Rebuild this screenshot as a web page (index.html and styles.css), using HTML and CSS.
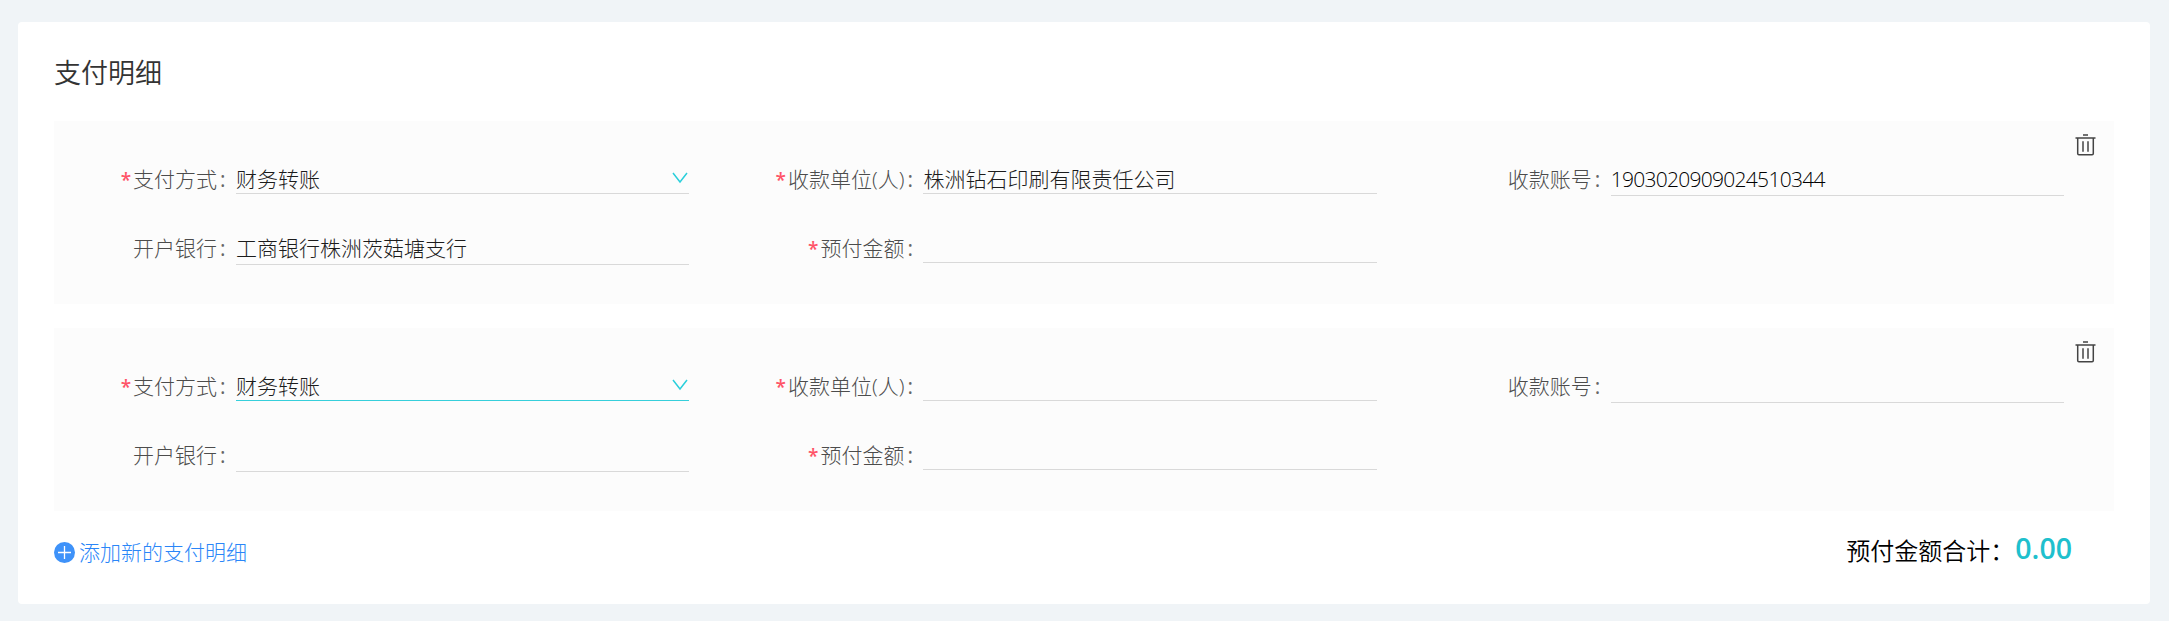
FILE: index.html
```
<!DOCTYPE html>
<html lang="zh-CN">
<head>
<meta charset="utf-8">
<title>支付明细</title>
<link rel="stylesheet" href="styles.css">
</head>
<body>
<svg class="sprite" aria-hidden="true">
  <symbol id="trash" viewBox="0 0 21 22">
    <path d="M8 1.1h5M.5 4h20M2.7 4v15.6q0 1.2 1.2 1.2h13.2q1.2 0 1.2-1.2V4M8 7.2v10.6M13 7.2v10.6" fill="none" stroke="currentColor" stroke-width="1.5"/>
  </symbol>
  <symbol id="chevron" viewBox="0 0 16 12">
    <path d="M1 1l7 9 7-9" fill="none" stroke="currentColor" stroke-width="1.5"/>
  </symbol>
</svg>
<main class="card">
  <h1 class="title">支付明细</h1>

  <section class="panel">
    <svg class="delete"><use href="#trash"/></svg>
    <div class="field">
      <label class="label required">支付方式</label>
      <div class="control select">财务转账<svg class="chevron"><use href="#chevron"/></svg></div>
    </div>
    <div class="field">
      <label class="label required">收款单位(人)</label>
      <div class="control">株洲钻石印刷有限责任公司</div>
    </div>
    <div class="field">
      <label class="label">收款账号</label>
      <div class="control tall number">1903020909024510344</div>
    </div>
    <div class="field">
      <label class="label">开户银行</label>
      <div class="control tall">工商银行株洲茨菇塘支行</div>
    </div>
    <div class="field">
      <label class="label required">预付金额</label>
      <div class="control"></div>
    </div>
  </section>

  <section class="panel">
    <svg class="delete"><use href="#trash"/></svg>
    <div class="field">
      <label class="label required">支付方式</label>
      <div class="control select active">财务转账<svg class="chevron"><use href="#chevron"/></svg></div>
    </div>
    <div class="field">
      <label class="label required">收款单位(人)</label>
      <div class="control"></div>
    </div>
    <div class="field">
      <label class="label">收款账号</label>
      <div class="control tall"></div>
    </div>
    <div class="field">
      <label class="label">开户银行</label>
      <div class="control tall"></div>
    </div>
    <div class="field">
      <label class="label required">预付金额</label>
      <div class="control"></div>
    </div>
  </section>

  <footer class="footer">
    <a class="add">
      <svg class="plus" viewBox="0 0 21 21"><circle cx="10.5" cy="10.5" r="10.5" fill="currentColor"/><path d="M4 10.5h13M10.5 4v13" stroke="#fff" stroke-width="1.3"/></svg>
      <span>添加新的支付明细</span>
    </a>
    <div class="total"><span>预付金额合计：</span><strong class="amount">0.00</strong></div>
  </footer>
</main>
</body>
</html>
```
FILE: styles.css
```
* { box-sizing: border-box; }

body {
  margin: 0;
  padding: 22px 19px 17px 18px;
  background: #f0f4f7;
  font-family: "Open Sans", "Noto Sans CJK SC", sans-serif;
  font-weight: 300;
  font-size: 21px;
  color: #1c1c1c;
}

.sprite { display: none; }

.card {
  height: 582px;
  padding: 31px 36px 0;
  background: #fff;
  border-radius: 4px;
}

.title {
  margin: 0 0 28px;
  font-size: 27px;
  line-height: 40px;
  font-weight: 350;
  color: #333;
}

.panel {
  position: relative;
  display: grid;
  grid-template-columns: repeat(3, 687.4px);
  grid-auto-rows: 69px;
  height: 183px;
  margin-bottom: 24px;
  padding-top: 39px;
  background: #fcfcfc;
}

.delete {
  position: absolute;
  top: 13px;
  right: 18px;
  width: 21px;
  height: 22px;
  color: #444;
}

.field {
  display: flex;
  align-items: flex-start;
  line-height: 38px;
  white-space: nowrap;
}

.label {
  width: 182px;
  padding-right: 10.4px;
  text-align: right;
  color: #4c4c4c;
}

.label::after {
  content: ":";
  margin-left: 3px;
  font-weight: 400;
  color: #666;
}

.required::before {
  content: "*";
  margin-right: 2px;
  font-weight: 600;
  font-size: 19px;
  color: #ff5468;
}

.control {
  width: 453.3px;
  height: 34px;
  border-bottom: 1px solid #d9d9d9;
}

.tall { height: 36px; }

.number {
  font-weight: 350;
  letter-spacing: -0.73px;
  color: #000;
}

.select {
  display: flex;
  justify-content: space-between;
}

.active { border-color: #36cfdb; }

.chevron {
  width: 16px;
  height: 12px;
  margin: 12px 1.3px 0 0;
  color: #2acfdb;
}

.footer {
  display: flex;
  justify-content: space-between;
  padding-right: 42px;
  line-height: 40px;
}

.add {
  display: flex;
  align-items: center;
  gap: 4px;
  height: 35px;
  color: #2a86f8;
}

.add span { line-height: 38px; margin-top: -1px; }

.plus {
  width: 21px;
  height: 21px;
  color: #3e92f9;
}

.total {
  display: flex;
  height: 32px;
  align-items: center;
  font-size: 24px;
  font-weight: 350;
  color: #000;
}

.amount {
  margin: -7px 0 0 1px;
  font-size: 28.5px;
  font-weight: 600;
  color: #1fc0cd;
}
```
